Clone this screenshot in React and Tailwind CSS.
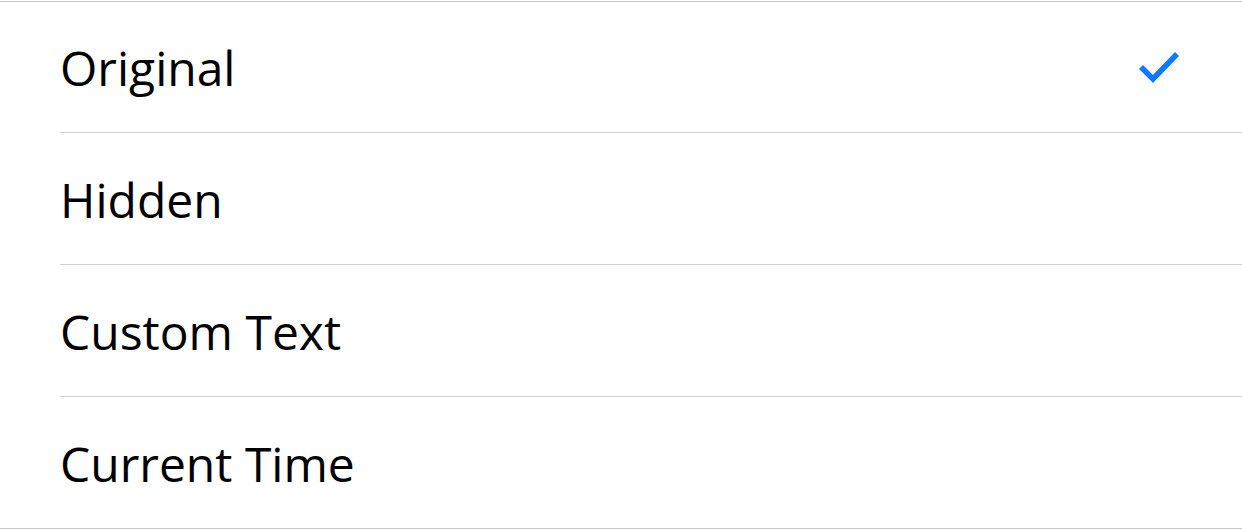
import React from 'react';

const options = ['Original', 'Hidden', 'Custom Text', 'Current Time'];

const Check = () => (
  <svg width="42" height="34" viewBox="0 0 42 34" fill="none">
    <path d="M3 17 L15 29 L39 4" stroke="#0a7aff" strokeWidth="5.5" strokeLinecap="butt" strokeLinejoin="miter" />
  </svg>
);

export default function App() {
  const selected = 'Original';
  return (
    <div className="min-h-screen bg-white pt-px" style={{ fontFamily: '"Open Sans", sans-serif' }}>
      <ul className="border-t border-b border-[#c8c7cc]">
        {options.map((opt, i) => (
          <li key={opt} className="pl-[60px]">
            <div
              className={
                'flex items-center justify-between pr-[62px] ' +
                (i === 0 ? 'h-[131px] border-b border-[#d1d1d6]' : i < options.length - 1 ? 'h-[132px] border-b border-[#d1d1d6]' : 'h-[131px]')
              }
            >
              <span className="text-[48px] text-black pt-[2px]">{opt}</span>
              {opt === selected && <Check />}
            </div>
          </li>
        ))}
      </ul>
    </div>
  );
}
